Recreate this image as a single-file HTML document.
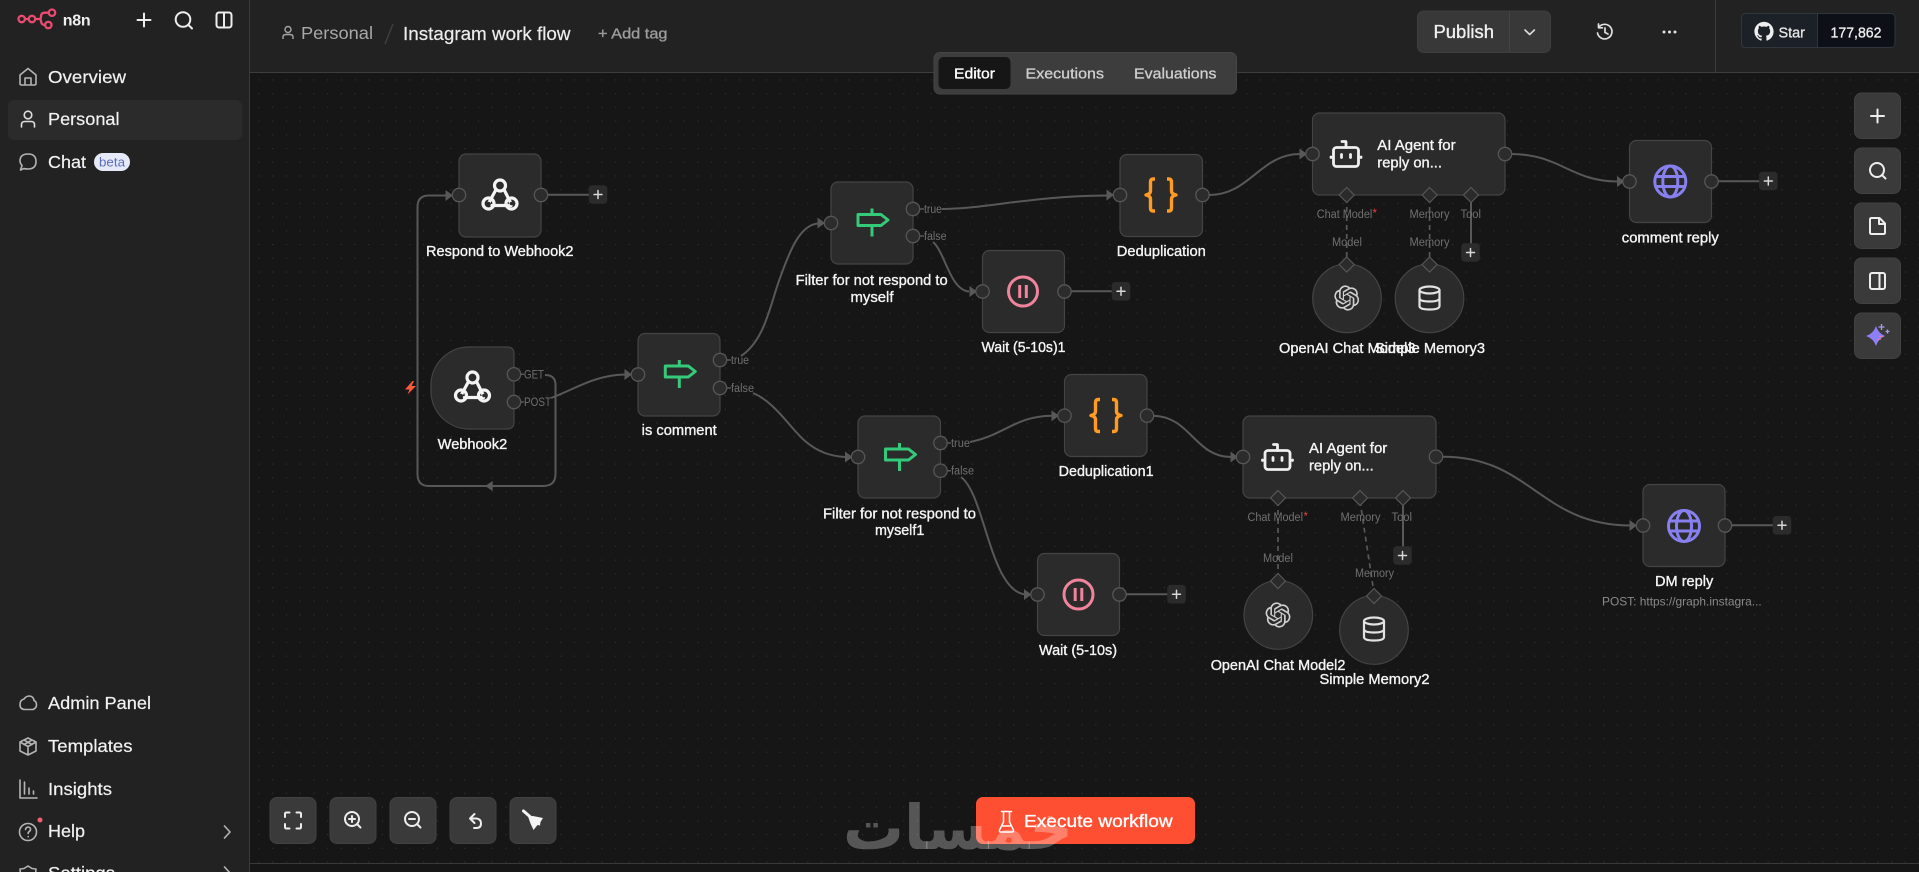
<!DOCTYPE html>
<html lang="en"><head><meta charset="utf-8"><title>Instagram work flow</title>
<style>
html,body{margin:0;padding:0;background:#161616;width:1919px;height:872px;overflow:hidden}
svg{display:block;font-family:"Liberation Sans","Noto Sans CJK SC",sans-serif}
.n{fill:#2b2b2b;stroke:#444;stroke-width:1.2}
.h{fill:#2c2c2c;stroke:#565656;stroke-width:1.3}
.e{fill:none;stroke:#585858;stroke-width:2}
.d{fill:none;stroke:#585858;stroke-width:1.7;stroke-dasharray:5 4}
.a{fill:#585858}
.l{fill:#f5f5f5;font-size:14.5px;stroke:#f5f5f5;stroke-width:.35}
.s{fill:#707070;font-size:11.5px}
.m{fill:#f2f2f2;font-size:17.5px;stroke:#f2f2f2;stroke-width:.2}
.i{fill:none;stroke:#b4b4b4;stroke-width:1.6;stroke-linecap:round;stroke-linejoin:round}
.w{fill:none;stroke:#ededed;stroke-width:2;stroke-linecap:round;stroke-linejoin:round}
.b{fill:#3a3a3a;stroke:#424242;stroke-width:1}
.p{fill:#2b2b2b}
.pt{fill:none;stroke:#d8d8d8;stroke-width:1.5;stroke-linecap:round}
</style></head><body>
<svg width="1919" height="872" viewBox="0 0 1919 872" xmlns="http://www.w3.org/2000/svg">
<defs>
<pattern id="g" x="313.3" y="573.3" width="13.72" height="13.72" patternUnits="userSpaceOnUse"><rect x="-.1" y="-.1" width="1.2" height="1.2" fill="#343434"/></pattern>
<g id="hook" fill="none" stroke="#f4f4f4" stroke-linecap="round"><circle cx="0" cy="-9.500" r="5.500" stroke-width="3.200"/><circle cx="-11.500" cy="8.500" r="5.500" stroke-width="3.200"/><circle cx="11.500" cy="8.500" r="5.500" stroke-width="3.200"/><path d="M-4.500-4.500L-11 7.500M4.500-4.500L10.500 7.500M-8 10.500H11" stroke-width="3.200"/><circle cx="0" cy="-9.500" r="1.800" fill="#2b2b2b" stroke="none"/><circle cx="-11.500" cy="8.500" r="1.800" fill="#2b2b2b" stroke="none"/><circle cx="11.500" cy="8.500" r="1.800" fill="#2b2b2b" stroke="none"/></g>
<g id="sign" fill="none" stroke="#35c97a" stroke-width="3" stroke-linejoin="round"><path d="M-14-8H9L16-2.500 9 3H-14Z"/><path d="M0-14V-8M0 3V14"/></g>
<g id="pause" fill="none" stroke="#f0849c" stroke-width="3"><circle r="14.500"/><path d="M-3.300-6.500V6.500M3.300-6.500V6.500"/></g>
<g id="brace" fill="none" stroke="#ff9b22" stroke-width="3.400" stroke-linejoin="round"><path d="M-6-16H-8Q-10.500-16-10.500-13V-4Q-10.500-1-15 0-10.500 1-10.500 4V13Q-10.500 16-8 16H-6"/><path d="M6-16H8Q10.500-16 10.500-13V-4Q10.500-1 15 0 10.500 1 10.500 4V13Q10.500 16 8 16H6"/></g>
<g id="robot" fill="none" stroke="#efefef" stroke-width="2.800" stroke-linecap="round" stroke-linejoin="round"><rect x="-12.500" y="-6.500" width="25" height="19" rx="3"/><path d="M-4-12.500H-.5Q0-12.500 0-12V-6.500M-15 3V3.500M15 3V3.500M-4.500 0.500V3.500M4.500 0.500V3.500"/></g>
<g id="globe" fill="none" stroke="#8880ee" stroke-width="3"><circle r="15.500"/><ellipse rx="7.500" ry="15.500"/><path d="M-14-5H14M-14 5H14"/></g>
<path id="ai" transform="translate(-12.600,-12.600) scale(1.05)" fill="#cfcfcf" d="M22.2819 9.8211a5.9847 5.9847 0 0 0-.5157-4.9108 6.0462 6.0462 0 0 0-6.5098-2.9A6.0651 6.0651 0 0 0 4.9807 4.1818a5.9847 5.9847 0 0 0-3.9977 2.9 6.0462 6.0462 0 0 0 .7427 7.0966 5.98 5.98 0 0 0 .511 4.9107 6.051 6.051 0 0 0 6.5146 2.9001A5.9847 5.9847 0 0 0 13.2599 24a6.0557 6.0557 0 0 0 5.7718-4.2058 5.9894 5.9894 0 0 0 3.9977-2.9001 6.0557 6.0557 0 0 0-.7475-7.0729zm-9.022 12.6081a4.4755 4.4755 0 0 1-2.8764-1.0408l.1419-.0804 4.7783-2.7582a.7948.7948 0 0 0 .3927-.6813v-6.7369l2.02 1.1686a.071.071 0 0 1 .038.052v5.5826a4.504 4.504 0 0 1-4.4945 4.4944zm-9.6607-4.1254a4.4708 4.4708 0 0 1-.5346-3.0137l.142.0852 4.783 2.7582a.7712.7712 0 0 0 .7806 0l5.8428-3.3685v2.3324a.0804.0804 0 0 1-.0332.0615L9.74 19.9502a4.4992 4.4992 0 0 1-6.1408-1.6464zM2.3408 7.8956a4.485 4.485 0 0 1 2.3655-1.9728V11.6a.7664.7664 0 0 0 .3879.6765l5.8144 3.3543-2.0201 1.1685a.0757.0757 0 0 1-.071 0l-4.8303-2.7865A4.504 4.504 0 0 1 2.3408 7.872zm16.5963 3.8558L13.1038 8.364 15.1192 7.2a.0757.0757 0 0 1 .071 0l4.8303 2.7913a4.4944 4.4944 0 0 1-.6765 8.1042v-5.6772a.79.79 0 0 0-.407-.667zm2.0107-3.0231l-.142-.0852-4.7735-2.7818a.7759.7759 0 0 0-.7854 0L9.409 9.2297V6.8974a.0662.0662 0 0 1 .0284-.0615l4.8303-2.7866a4.4992 4.4992 0 0 1 6.6802 4.66zM8.3065 12.863l-2.02-1.1638a.0804.0804 0 0 1-.038-.0567V6.0742a4.4992 4.4992 0 0 1 7.3757-3.4537l-.142.0805L8.704 5.459a.7948.7948 0 0 0-.3927.6813zm1.0976-2.3654l2.602-1.4998 2.6069 1.4998v2.9994l-2.5974 1.4997-2.6067-1.4997Z"/>
<g id="db" fill="none" stroke="#e2e2e2" stroke-width="2.200"><ellipse cy="-8" rx="10" ry="3.500"/><path d="M-10-8V8Q-10 11.500 0 11.500T10 8V-8M-10 0Q-10 3.500 0 3.500T10 0"/></g>
<path id="dia" d="M0-7.500 7.500 0 0 7.500-7.500 0Z" fill="#2b2b2b" stroke="#565656" stroke-width="1.200"/>
<path id="arr" d="M-7.500-5.500 0 0-7.500 5.500Z" fill="#585858"/>
<g id="plus"><rect x="-9.300" y="-9.300" width="18.600" height="18.600" rx="3.500" class="p"/><path class="pt" d="M-4 0H4M0-4V4"/></g>
</defs>

<!-- canvas -->
<rect width="1919" height="872" fill="#161616"/>
<rect x="250" y="73" width="1669" height="790" fill="url(#g)"/>
<rect x="250" y="863" width="1669" height="1" fill="#3a3a3a"/>

<!-- sidebar -->
<rect width="249" height="872" fill="#222"/>
<rect x="249" width="1" height="872" fill="#3a3a3a"/>
<!-- header -->
<rect x="250" width="1669" height="72" fill="#222"/>
<rect x="250" y="72" width="1669" height="1" fill="#3d3d3d"/>
<rect x="1715" width="1" height="72" fill="#3a3a3a"/>

<!-- logo -->
<g fill="none" stroke="#ea4b71" stroke-width="2.300">
<circle cx="21.700" cy="19" r="3.200"/><circle cx="32" cy="19" r="3.200"/><circle cx="52" cy="12.700" r="3.200"/><circle cx="48.300" cy="25" r="3.200"/>
<path d="M25 19H28.800M35.200 19H39.500Q41 19 41 16.500 41 12.700 45 12.700H48.800M39.500 19Q41 19 41 21.500 41.500 25 45 25"/>
</g>
<text x="62.700" y="25.500" font-size="16" font-weight="700" fill="#eee" textLength="28" lengthAdjust="spacing">n8n</text>
<path class="w" d="M137.500 20H150.500M144 13.500V26.500"/>
<circle cx="183" cy="19.500" r="7.300" class="w"/><path class="w" d="M188.500 25L192 28.500"/>
<rect x="216.500" y="12.500" width="15" height="15" rx="2.500" class="w"/><path class="w" d="M224 12.500V27.500"/>

<!-- nav -->
<rect x="8" y="100" width="234" height="40" rx="6" fill="#2b2b2b"/>
<path class="i" d="M20 83.500V75L28 68.500 36 75V83.500Q36 85 34.500 85H21.500Q20 85 20 83.500ZM25 85V78H31V85"/>
<circle cx="28" cy="115" r="3.800" class="i" style="stroke:#ddd"/><path class="i" d="M21.500 127V124.500Q21.500 121.500 25 121.500H31Q34.500 121.500 34.500 124.500V127" style="stroke:#ddd"/>
<path class="i" d="M20.500 170L22 165.500Q20 163 20 161 20 154 28 154 36 154 36 161.500 36 169 28 169 25 169 24 168.500Z"/>
<path class="i" d="M33 709.500H25Q20 709.500 20 704.500 20 700 24 699 26 696 29.500 696 33.500 696.500 34 700.500 36.500 701.500 36.500 705 36.500 708 33 709.500Z"/>
<path class="i" d="M28 738L36 742V751L28 755 20 751V742ZM20 742L28 746.500 36 742M28 746.500V755M24 740L32 744.500M32 740L24 744.500"/>
<path class="i" d="M20 780V798H37M24.500 782V794M29 788V794M33.500 791V794"/>
<circle cx="28" cy="832" r="8.500" class="i"/><path class="i" d="M25.500 829.500Q26 827 28.200 827 31 827.500 30.500 830 29.500 831.500 28.200 832.500V833.500M28.200 836.500V836.700"/>
<circle cx="40" cy="820" r="2.500" fill="#f0616f"/>
<path class="i" d="M224.500 826L230 832 224.500 838M224.500 867L230 873 224.500 879"/>
<path class="i" d="M28 866L32 868.500 36 869 35.500 875 37 878H19L20.500 875 20 869 24 868.500Z"/>

<text class="m" x="48" y="83" textLength="78" lengthAdjust="spacingAndGlyphs">Overview</text>
<text class="m" x="48" y="125" textLength="71.500" lengthAdjust="spacingAndGlyphs">Personal</text>
<text class="m" x="48" y="168" textLength="38" lengthAdjust="spacingAndGlyphs">Chat</text>
<rect x="94" y="153" width="36" height="18" rx="9" fill="#e6eaf8"/>
<text x="99" y="166.500" font-size="13" fill="#5b6cba" textLength="26" lengthAdjust="spacingAndGlyphs">beta</text>
<text class="m" x="48" y="709" textLength="103" lengthAdjust="spacingAndGlyphs">Admin Panel</text>
<text class="m" x="48" y="752" textLength="84.500" lengthAdjust="spacingAndGlyphs">Templates</text>
<text class="m" x="48" y="795" textLength="64" lengthAdjust="spacingAndGlyphs">Insights</text>
<text class="m" x="48" y="837" textLength="37" lengthAdjust="spacingAndGlyphs">Help</text>
<text class="m" x="48" y="879" textLength="67" lengthAdjust="spacingAndGlyphs">Settings</text>

<!-- header left -->
<circle cx="288" cy="29.500" r="3" fill="none" stroke="#a5a5a5" stroke-width="1.400"/><path d="M283 39V37Q283 34.500 286 34.500H290Q293 34.500 293 37V39" fill="none" stroke="#a5a5a5" stroke-width="1.400"/>
<text x="301" y="39" font-size="17.500" fill="#a8a8a8" textLength="72" lengthAdjust="spacingAndGlyphs">Personal</text>
<path d="M393 24L385 44" stroke="#444" stroke-width="1.200"/>
<text x="403" y="40" font-size="18" fill="#ececec" stroke="#ececec" stroke-width=".2" textLength="167.500" lengthAdjust="spacingAndGlyphs">Instagram work flow</text>
<text x="598" y="38.500" font-size="15" fill="#9c9c9c" stroke="#9c9c9c" stroke-width=".35" textLength="69.500" lengthAdjust="spacingAndGlyphs">+ Add tag</text>

<!-- publish -->
<rect x="1417.500" y="11" width="133" height="41.500" rx="6" fill="#383838" stroke="#3e3e3e"/>
<rect x="1509" y="11" width="1" height="41.500" fill="#444"/>
<text x="1433.500" y="38" font-size="18" fill="#f0f0f0" stroke="#f0f0f0" stroke-width=".35" textLength="60.500" lengthAdjust="spacingAndGlyphs">Publish</text>
<path d="M1525 30L1529.700 34.500 1534.400 30" fill="none" stroke="#ddd" stroke-width="1.600" stroke-linecap="round" stroke-linejoin="round"/>
<g fill="none" stroke="#e0e0e0" stroke-width="1.700" stroke-linecap="round" stroke-linejoin="round"><path d="M1599 27A7.300 7.300 0 1 1 1597.500 33M1598.500 24V27.800H1602.500M1605 28V32.500L1608 34"/></g>
<g fill="#e0e0e0"><circle cx="1664" cy="32" r="1.500"/><circle cx="1669.500" cy="32" r="1.500"/><circle cx="1675" cy="32" r="1.500"/></g>
<!-- star -->
<rect x="1741.500" y="13.500" width="153.500" height="34" rx="4" fill="#0d1117" stroke="#30363d"/>
<path d="M1745.500 13.500H1817.500V47.500H1745.500Q1741.500 47.500 1741.500 43.500V17.500Q1741.500 13.500 1745.500 13.500Z" fill="#1c2128" stroke="#30363d"/>
<path transform="translate(1754.400,21.900) scale(1.200)" fill="#eee" d="M8 0C3.58 0 0 3.58 0 8c0 3.54 2.29 6.53 5.47 7.59.4.07.55-.17.55-.38 0-.19-.01-.82-.01-1.49-2.01.37-2.53-.49-2.69-.94-.09-.23-.48-.94-.82-1.13-.28-.15-.68-.52-.01-.53.63-.01 1.08.58 1.23.82.72 1.21 1.87.87 2.33.66.07-.52.28-.87.51-1.07-1.78-.2-3.64-.89-3.64-3.95 0-.87.31-1.59.82-2.15-.08-.2-.36-1.02.08-2.12 0 0 .67-.21 2.2.82.64-.18 1.32-.27 2-.27.68 0 1.36.09 2 .27 1.53-1.04 2.2-.82 2.2-.82.44 1.1.16 1.92.08 2.12.51.56.82 1.27.82 2.15 0 3.07-1.87 3.75-3.65 3.95.29.25.54.73.54 1.48 0 1.07-.01 1.93-.01 2.2 0 .21.15.46.55.38A8.013 8.013 0 0 0 16 8c0-4.420-3.580-8-8-8z"/>
<text x="1778.500" y="37.500" font-size="14.500" fill="#e6e6e6" stroke="#e6e6e6" stroke-width=".3" textLength="26.500" lengthAdjust="spacingAndGlyphs">Star</text>
<text x="1830.500" y="37.500" font-size="14.500" fill="#f0f0f0" stroke="#f0f0f0" stroke-width=".3" textLength="51" lengthAdjust="spacingAndGlyphs">177,862</text>

<!-- edges -->
<path class="e" d="M545 375Q555.500 375 555.500 385V474Q555.500 486 543 486H429Q417.500 486 417.500 474V207Q417.500 195.500 429 195.500H447"/>
<use href="#arr" x="453" y="195.500"/>
<path class="a" d="M485 486L492.700 481V491Z"/>
<path class="e" d="M551 398C575 389 595 375 625 374.500"/><use href="#arr" x="632" y="374.500"/>
<path class="e" d="M741 356C765 340 770 305 780 278 790 250 800 225 818 223.500"/><use href="#arr" x="825" y="223"/>
<path class="e" d="M753 393C775 402 790 428 805 441 818 452 830 456 845 457"/><use href="#arr" x="852.500" y="457"/>
<path class="e" d="M942 209C985 209 1030 196 1107 195.500"/><use href="#arr" x="1114" y="195"/>
<path class="e" d="M933 242C945 252 950 290 969 291.500"/><use href="#arr" x="977" y="291.500"/>
<path class="e" d="M1209 195C1250 195 1260 154 1300 154"/><use href="#arr" x="1307" y="154"/>
<path class="e" d="M1511 154C1560 154 1570 181 1617 181.500"/><use href="#arr" x="1624.500" y="181.500"/>
<path class="e" d="M970 442C1005 435 1015 416 1052 415.700"/><use href="#arr" x="1059" y="415.700"/>
<path class="e" d="M961 477C985 495 990 590 1025 594.500"/><use href="#arr" x="1031.500" y="594.500"/>
<path class="e" d="M1153 415.700C1190 416 1195 457 1231 457"/><use href="#arr" x="1238" y="457"/>
<path class="e" d="M1442 456.700C1530 456 1540 525 1630 525.500"/><use href="#arr" x="1637" y="525.500"/>
<!-- stubs -->
<path class="e" d="M547 194.800H589M1071 291.300H1112M1718 181.300H1759M1126 594.300H1168M1731 525.300H1773"/>
<path class="e" d="M1471 195V244M1403 498V547"/>
<path class="d" d="M1346.700 198V262M1429.600 198V262M1278 501V578M1360 501L1374 593"/>
<path d="M520.500 374.300H524M520.500 402H524M726.500 360H731M726.500 388H731M919.500 209H924M919.500 236H924M947 443H951M947 470.700H951" stroke="#585858" stroke-width="1.500"/>

<!-- nodes -->
<rect class="n" x="459" y="154" width="82" height="83" rx="7"/>
<path class="n" d="M469 347H507Q514 347 514 354V422Q514 429 507 429H469A38 38 0 0 1 431 391V385A38 38 0 0 1 469 347Z"/>
<rect class="n" x="638" y="333.500" width="82" height="82.500" rx="7"/>
<rect class="n" x="831" y="182" width="82" height="82" rx="7"/>
<rect class="n" x="982.500" y="250.500" width="82" height="82" rx="7"/>
<rect class="n" x="1120" y="154.500" width="82.500" height="82" rx="7"/>
<rect class="n" x="1312.500" y="113" width="192.500" height="82" rx="7"/>
<rect class="n" x="1629.500" y="140.500" width="82" height="82" rx="7"/>
<rect class="n" x="858" y="416" width="82.500" height="82" rx="7"/>
<rect class="n" x="1064.500" y="374.500" width="82.500" height="82" rx="7"/>
<rect class="n" x="1243" y="416" width="193" height="82" rx="7"/>
<rect class="n" x="1037.500" y="553.500" width="82" height="82" rx="7"/>
<rect class="n" x="1643" y="484.500" width="82" height="82" rx="7"/>
<circle class="n" cx="1347" cy="298.300" r="34.300"/>
<circle class="n" cx="1429.500" cy="298.300" r="34.300"/>
<circle class="n" cx="1278.300" cy="615" r="34.300"/>
<circle class="n" cx="1374" cy="630" r="34.300"/>

<!-- diamonds -->
<use href="#dia" x="1346.700" y="195"/><use href="#dia" x="1429.600" y="195"/><use href="#dia" x="1471" y="195"/>
<use href="#dia" x="1346.700" y="264.500"/><use href="#dia" x="1429.600" y="264.500"/>
<use href="#dia" x="1278" y="498"/><use href="#dia" x="1360" y="498"/><use href="#dia" x="1403" y="498"/>
<use href="#dia" x="1278" y="581"/><use href="#dia" x="1374" y="596"/>

<!-- handles -->
<g class="h">
<circle class="h" cx="459" cy="195" r="6.700"/><circle class="h" cx="541" cy="195" r="6.700"/>
<circle class="h" cx="514" cy="374.300" r="6.700"/><circle class="h" cx="514" cy="402" r="6.700"/>
<circle class="h" cx="638" cy="374.500" r="6.700"/><circle class="h" cx="720" cy="360" r="6.700"/><circle class="h" cx="720" cy="388" r="6.700"/>
<circle class="h" cx="831" cy="223" r="6.700"/><circle class="h" cx="913" cy="209" r="6.700"/><circle class="h" cx="913" cy="236" r="6.700"/>
<circle class="h" cx="982.500" cy="291.500" r="6.700"/><circle class="h" cx="1064.500" cy="291.500" r="6.700"/>
<circle class="h" cx="1120" cy="195" r="6.700"/><circle class="h" cx="1202.500" cy="195" r="6.700"/>
<circle class="h" cx="1312.500" cy="154" r="6.700"/><circle class="h" cx="1505" cy="154" r="6.700"/>
<circle class="h" cx="1629.500" cy="181.500" r="6.700"/><circle class="h" cx="1711.500" cy="181.500" r="6.700"/>
<circle class="h" cx="858" cy="457" r="6.700"/><circle class="h" cx="940.500" cy="443" r="6.700"/><circle class="h" cx="940.500" cy="470.700" r="6.700"/>
<circle class="h" cx="1064.500" cy="415.700" r="6.700"/><circle class="h" cx="1147" cy="415.700" r="6.700"/>
<circle class="h" cx="1243" cy="457" r="6.700"/><circle class="h" cx="1436" cy="456.700" r="6.700"/>
<circle class="h" cx="1037.500" cy="594.500" r="6.700"/><circle class="h" cx="1119.500" cy="594.500" r="6.700"/>
<circle class="h" cx="1643" cy="525.500" r="6.700"/><circle class="h" cx="1725" cy="525.500" r="6.700"/>
</g>

<!-- plus boxes -->
<use href="#plus" x="598" y="194.500"/><use href="#plus" x="1121" y="291.300"/><use href="#plus" x="1768.300" y="181"/>
<use href="#plus" x="1176.500" y="594.200"/><use href="#plus" x="1782" y="525.300"/>
<use href="#plus" x="1470.500" y="252.500"/><use href="#plus" x="1402.500" y="555.500"/>

<!-- icons -->
<use href="#hook" x="500" y="195"/><use href="#hook" x="472.500" y="387"/>
<use href="#sign" x="679.300" y="374"/><use href="#sign" x="872" y="222.500"/><use href="#sign" x="899.500" y="457"/>
<use href="#pause" x="1023" y="291.500"/><use href="#pause" x="1078.500" y="594.500"/>
<use href="#brace" x="1161" y="195"/><use href="#brace" x="1106" y="415.500"/>
<use href="#robot" x="1346" y="154"/><use href="#robot" x="1277.500" y="457"/>
<use href="#globe" x="1670.300" y="181.500"/><use href="#globe" x="1684" y="526"/>
<use href="#ai" x="1346.700" y="298"/><use href="#ai" x="1278" y="615"/>
<use href="#db" x="1429.500" y="298"/><use href="#db" x="1374" y="629"/>
<path d="M412.500 381L405 389.500H409.500L407.500 394.500 416 386H411.500L414 381Z" fill="#ff5a3c"/>

<!-- small labels -->
<text class="s" x="524" y="378.300" textLength="20" lengthAdjust="spacingAndGlyphs">GET</text>
<text class="s" x="524" y="406" textLength="27" lengthAdjust="spacingAndGlyphs">POST</text>
<text class="s" x="731" y="364" textLength="18" lengthAdjust="spacingAndGlyphs">true</text>
<text class="s" x="731" y="392" textLength="23" lengthAdjust="spacingAndGlyphs">false</text>
<text class="s" x="924" y="213" textLength="18" lengthAdjust="spacingAndGlyphs">true</text>
<text class="s" x="924" y="240" textLength="22.500" lengthAdjust="spacingAndGlyphs">false</text>
<text class="s" x="951" y="447" textLength="19" lengthAdjust="spacingAndGlyphs">true</text>
<text class="s" x="951" y="474.700" textLength="23" lengthAdjust="spacingAndGlyphs">false</text>
<text class="s" x="1316.800" y="218" textLength="55.500" lengthAdjust="spacingAndGlyphs">Chat Model</text><text x="1372.500" y="217" font-size="11.500" fill="#e8413a">*</text>
<text class="s" x="1409.500" y="218" textLength="40" lengthAdjust="spacingAndGlyphs">Memory</text>
<text class="s" x="1460.500" y="218" textLength="20.500" lengthAdjust="spacingAndGlyphs">Tool</text>
<text class="s" x="1332" y="246" textLength="30" lengthAdjust="spacingAndGlyphs">Model</text>
<text class="s" x="1409.500" y="246" textLength="40" lengthAdjust="spacingAndGlyphs">Memory</text>
<text class="s" x="1247.500" y="521" textLength="55.500" lengthAdjust="spacingAndGlyphs">Chat Model</text><text x="1303.500" y="520" font-size="11.500" fill="#e8413a">*</text>
<text class="s" x="1340.500" y="521" textLength="40" lengthAdjust="spacingAndGlyphs">Memory</text>
<text class="s" x="1391.500" y="521" textLength="20.500" lengthAdjust="spacingAndGlyphs">Tool</text>
<text class="s" x="1263" y="562" textLength="30" lengthAdjust="spacingAndGlyphs">Model</text>
<text class="s" x="1355" y="577" textLength="39" lengthAdjust="spacingAndGlyphs">Memory</text>

<!-- node labels -->
<text class="l" x="426" y="256" textLength="147.500" lengthAdjust="spacingAndGlyphs">Respond to Webhook2</text>
<text class="l" x="437.700" y="449" textLength="69.500" lengthAdjust="spacingAndGlyphs">Webhook2</text>
<text class="l" x="641.700" y="435" textLength="75" lengthAdjust="spacingAndGlyphs">is comment</text>
<text class="l" x="795.700" y="285" textLength="152" lengthAdjust="spacingAndGlyphs">Filter for not respond to</text>
<text class="l" x="850.500" y="302" textLength="43" lengthAdjust="spacingAndGlyphs">myself</text>
<text class="l" x="981.500" y="352" textLength="84" lengthAdjust="spacingAndGlyphs">Wait (5-10s)1</text>
<text class="l" x="1116.800" y="256" textLength="89" lengthAdjust="spacingAndGlyphs">Deduplication</text>
<text class="l" x="1279" y="353" textLength="136.500" lengthAdjust="spacingAndGlyphs">OpenAI Chat Model3</text>
<text class="l" x="1375" y="353" textLength="110" lengthAdjust="spacingAndGlyphs">Simple Memory3</text>
<text class="l" x="1621.800" y="242.500" textLength="97" lengthAdjust="spacingAndGlyphs">comment reply</text>
<text class="l" x="1377.300" y="150" textLength="78.300" lengthAdjust="spacingAndGlyphs">AI Agent for</text>
<text class="l" x="1377.300" y="167.500" textLength="64.700" lengthAdjust="spacingAndGlyphs">reply on...</text>
<text class="l" x="823" y="518.500" textLength="153" lengthAdjust="spacingAndGlyphs">Filter for not respond to</text>
<text class="l" x="875" y="535" textLength="49.300" lengthAdjust="spacingAndGlyphs">myself1</text>
<text class="l" x="1058.600" y="476" textLength="95" lengthAdjust="spacingAndGlyphs">Deduplication1</text>
<text class="l" x="1039" y="655" textLength="78" lengthAdjust="spacingAndGlyphs">Wait (5-10s)</text>
<text class="l" x="1309" y="453" textLength="78.300" lengthAdjust="spacingAndGlyphs">AI Agent for</text>
<text class="l" x="1309" y="470.500" textLength="64.700" lengthAdjust="spacingAndGlyphs">reply on...</text>
<text class="l" x="1210.700" y="670" textLength="134.700" lengthAdjust="spacingAndGlyphs">OpenAI Chat Model2</text>
<text class="l" x="1319.500" y="684" textLength="110" lengthAdjust="spacingAndGlyphs">Simple Memory2</text>
<text class="l" x="1655" y="586" textLength="58.300" lengthAdjust="spacingAndGlyphs">DM reply</text>
<text x="1602" y="605.500" font-size="12" fill="#8a8a8a" textLength="159.700" lengthAdjust="spacingAndGlyphs">POST: https://graph.instagra...</text>

<!-- tabs -->
<rect x="934" y="52.500" width="302.500" height="41.500" rx="6" fill="#3d3d3d" stroke="#454545"/>
<rect x="938.500" y="57" width="72" height="32" rx="5" fill="#161616"/>
<text x="954" y="78.500" font-size="15" fill="#fff" stroke="#fff" stroke-width=".35" textLength="41" lengthAdjust="spacingAndGlyphs">Editor</text>
<text x="1025.500" y="78.500" font-size="15" fill="#cfcfcf" stroke="#cfcfcf" stroke-width=".3" textLength="78.500" lengthAdjust="spacingAndGlyphs">Executions</text>
<text x="1134" y="78.500" font-size="15" fill="#cfcfcf" stroke="#cfcfcf" stroke-width=".3" textLength="82.500" lengthAdjust="spacingAndGlyphs">Evaluations</text>

<!-- right buttons -->
<rect class="b" x="1854.500" y="93" width="46" height="45.500" rx="7"/>
<rect class="b" x="1854.500" y="148" width="46" height="45.500" rx="7"/>
<rect class="b" x="1854.500" y="203" width="46" height="45.500" rx="7"/>
<rect class="b" x="1854.500" y="258" width="46" height="45.500" rx="7"/>
<rect class="b" x="1854.500" y="313" width="46" height="45.500" rx="7"/>
<path class="w" d="M1871 116H1884M1877.500 109.500V122.500"/>
<circle class="w" cx="1877" cy="170" r="7"/><path class="w" d="M1882.500 175.500L1885.500 178.500"/>
<path class="w" d="M1870 219.500Q1870 218 1871.500 218H1879.500L1885 223.500V232.500Q1885 234 1883.500 234H1871.500Q1870 234 1870 232.500ZM1879 218.500V224H1885"/>
<rect class="w" x="1870" y="273" width="15" height="16" rx="2"/><path class="w" d="M1879.500 273V289"/>
<path d="M1876 326Q1878.500 333.500 1885 336 1878.500 338.500 1876 346 1873.500 338.500 1866 336 1873.500 333.500 1876 326Z" fill="#8d7ff5"/>
<path d="M1881.500 324V330M1878.500 327H1884.500M1887.500 329.500V333.500M1885.500 331.500H1889.500" stroke="#a89af5" stroke-width="1.300"/>
<path d="M1879 337L1884 336M1877 340L1881 339" stroke="#f07a9a" stroke-width="1"/>

<!-- bottom-left buttons -->
<rect class="b" x="270" y="797.500" width="46" height="46" rx="7"/>
<rect class="b" x="330" y="797.500" width="46" height="46" rx="7"/>
<rect class="b" x="390" y="797.500" width="46" height="46" rx="7"/>
<rect class="b" x="450" y="797.500" width="46" height="46" rx="7"/>
<rect class="b" x="510" y="797.500" width="46" height="46" rx="7"/>
<path class="w" d="M285 817V814Q285 812.500 286.500 812.500H289.500M296.500 812.500H299.500Q301 812.500 301 814V817M301 824V827Q301 828.500 299.500 828.500H296.500M289.500 828.500H286.500Q285 828.500 285 827V824"/>
<circle class="w" cx="352" cy="819" r="7"/><path class="w" d="M357.500 824.500L360.500 827.500M349 819H355M352 816V822"/>
<circle class="w" cx="412" cy="819" r="7"/><path class="w" d="M417.500 824.500L420.500 827.500M409 819H415"/>
<path class="w" d="M470 818.500L474.500 814M470 818.500L474.500 823M470 818.500H476.500Q481 819 481 823.500 481 828 476.500 828H474"/>
<path d="M523.500 811L531 817.500" stroke="#f4f4f4" stroke-width="3" stroke-linecap="round"/>
<path d="M528 816.500L533 816 543 818 540.500 822 540 825.500 537.500 825 533.500 830 530.500 823.500Z" fill="#f4f4f4"/>

<!-- execute -->
<rect x="976" y="797" width="219" height="47" rx="7" fill="#ff4f33"/>
<path d="M1003.500 812V822L999.500 830Q999 832 1001 832H1012Q1014 832 1013.500 830L1009.500 822V812M1001.500 811.500H1011.500M1002 826H1011" fill="none" stroke="#fff" stroke-width="1.500" stroke-linecap="round" stroke-linejoin="round"/>
<text x="1024" y="827" font-size="17.500" fill="#fff" stroke="#fff" stroke-width=".35" textLength="148.700" lengthAdjust="spacingAndGlyphs">Execute workflow</text>

<!-- watermark -->
<text x="958" y="849" text-anchor="middle" direction="rtl" font-family="'DejaVu Sans',sans-serif" font-weight="700" font-size="62" fill="#fff" fill-opacity=".28" textLength="230" lengthAdjust="spacingAndGlyphs">خمسات</text>
</svg>
</body></html>
